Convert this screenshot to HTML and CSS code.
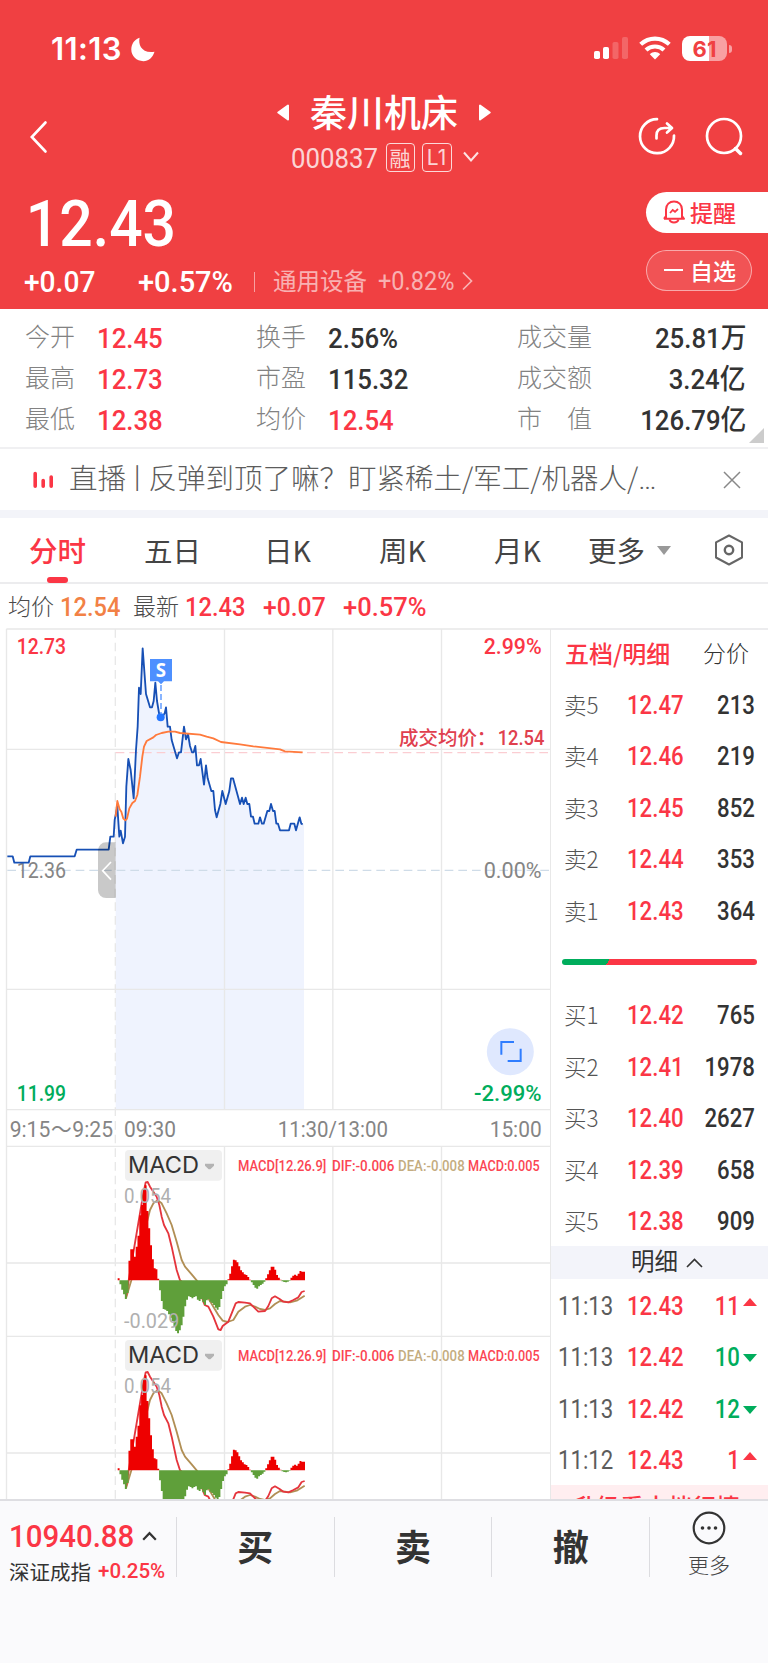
FILE: index.html
```html
<!DOCTYPE html>
<html lang="zh-CN">

<head>
    <meta charset="UTF-8">
    <meta name="viewport" content="width=device-width, initial-scale=1.0">
    <title>秦川机床 000837</title>
    <link rel="stylesheet" href="styles.css">
</head>

<body>

    <header class="header">
        <div class="status-bar">
            <div class="status-left">
                <span class="clock">11:13</span>
                <svg class="moon" width="24" height="25" viewBox="0 0 24 25"><path fill="#fff" d="M8.6.8C7 7.500 10.500 16.800 23.500 14.800 21.700 20.600 17.600 24.200 12.300 24.200 5.600 24.200.3 19.200.3 12.600.3 7 3.600 2.300 8.600.8z"/></svg>
            </div>
            <div class="status-right">
                <svg width="34" height="24" viewBox="0 0 34 24" fill="#fff">
                    <rect x="0" y="15" width="6" height="8" rx="1.800"/>
                    <rect x="9" y="11" width="6" height="12" rx="1.800"/>
                    <rect x="18.500" y="6" width="6" height="17" rx="1.800" opacity=".2"/>
                    <rect x="28" y="1" width="6" height="22" rx="1.800" opacity=".2"/>
                </svg>
                <svg width="32" height="24" viewBox="0 0 32 24" fill="none" stroke="#fff">
                    <path stroke-width="4.200" d="M1.700 8.300C10 .6 22 .6 30.300 8.300"/>
                    <path stroke-width="4.200" d="M7 14C12 9.300 20 9.300 25 14"/>
                    <path fill="#fff" stroke="none" d="M10.800 18.300C13.700 15.300 18.300 15.300 21.200 18.300L16 23.500z"/>
                </svg>
                <div class="battery"><span class="battery-text">61</span></div>
            </div>
        </div>

        <div class="title-bar">
            <svg class="back" width="18" height="34" viewBox="0 0 18 34"><path d="M15.500 2.500L1.800 17l13.700 14.500" fill="none" stroke="#fff" stroke-width="2.600" stroke-linecap="round"/></svg>
            <div class="title-main">
                <div class="title-name">
                    <svg width="12" height="17" viewBox="0 0 12 17"><path fill="#fff" stroke="#fff" stroke-width="2" stroke-linejoin="round" d="M11 1.500v14L1.300 8.500z"/></svg>
                    <span>秦川机床</span>
                    <svg width="12" height="17" viewBox="0 0 12 17"><path fill="#fff" stroke="#fff" stroke-width="2" stroke-linejoin="round" d="M1 1.500v14l9.700-7z"/></svg>
                </div>
                <div class="title-code">
                    <span class="num code">000837</span>
                    <span class="badge">融</span>
                    <span class="badge badge-l1">L1</span>
                    <svg width="16" height="12" viewBox="0 0 16 12"><path d="M1 1.500l7 8 7-8" fill="none" stroke="#fff" stroke-opacity=".85" stroke-width="2"/></svg>
                </div>
            </div>
            <div class="title-icons">
                <svg width="38" height="38" viewBox="0 0 38 38" fill="none" stroke="#fff" stroke-width="2.700" stroke-linecap="round" stroke-linejoin="round">
                    <path d="M19 2.200A17 17 0 1 0 36 18.500"/>
                    <path d="M18.500 21.500v-3c0-5 3-7.500 8-7.500h7M29 6.500l5 4.500-5 4.500"/>
                </svg>
                <svg width="38" height="40" viewBox="0 0 38 40" fill="none" stroke="#fff" stroke-width="2.700" stroke-linecap="round">
                    <circle cx="19" cy="19" r="17"/>
                    <path stroke-width="3.500" d="M30.500 31.500l5 5"/>
                </svg>
            </div>
        </div>

        <div class="quote">
            <div class="quote-left">
                <div class="num price">12.43</div>
                <div class="change">
                    <span class="num change-value">+0.07</span>
                    <span class="num change-rate">+0.57%</span>
                    <span class="change-line"></span>
                    <span class="sector">通用设备</span>
                    <span class="num sector-rate">+0.82%</span>
                    <svg width="11" height="20" viewBox="0 0 11 20"><path d="M1 1.500L9.500 10 1 18.500" fill="none" stroke="#fff" stroke-opacity=".6" stroke-width="1.700"/></svg>
                </div>
            </div>
            <div class="quote-right">
                <div class="pill pill-alert">
                    <svg width="22" height="24" viewBox="0 0 22 24" fill="none" stroke="#fb3645" stroke-width="2">
                        <path stroke-linejoin="round" d="M3 18V9.500C3 4.500 6.500 1.500 11 1.500s8 3 8 8V18M1 18.800h20L19 16M3 16l-2 2.800"/>
                        <path d="M6.500 19.500c1.200 4 7.800 4 9 0"/>
                        <path stroke-width="1.800" d="M7 13l2.700-3 2.300 1.800L15 9"/>
                    </svg>
                    <span>提醒</span>
                </div>
                <div class="pill pill-self">
                    <span class="minus"></span>
                    <span>自选</span>
                </div>
            </div>
        </div>
    </header>

    <section class="stats">
        <div class="stats-col col-1">
            <div class="stat"><span class="label">今开</span><span class="num red">12.45</span></div>
            <div class="stat"><span class="label">最高</span><span class="num red">12.73</span></div>
            <div class="stat"><span class="label">最低</span><span class="num red">12.38</span></div>
        </div>
        <div class="stats-col col-2">
            <div class="stat"><span class="label">换手</span><span class="num">2.56%</span></div>
            <div class="stat"><span class="label">市盈</span><span class="num">115.32</span></div>
            <div class="stat"><span class="label">均价</span><span class="num red">12.54</span></div>
        </div>
        <div class="stats-col col-3">
            <div class="stat"><span class="label">成交量</span><span class="num">25.81万</span></div>
            <div class="stat"><span class="label">成交额</span><span class="num">3.24亿</span></div>
            <div class="stat"><span class="label">市　值</span><span class="num">126.79亿</span></div>
        </div>
        <span class="corner"></span>
    </section>

    <div class="news">
        <svg width="21" height="18" viewBox="0 0 21 18" stroke="#fb3645" stroke-width="3.600" stroke-linecap="round"><path d="M2.200 2.500v12.800M10.200 9.500v5.800M18.200 6v9.300"/></svg>
        <span class="news-text">直播<span class="news-bar">丨</span>反弹到顶了嘛？盯紧稀土/军工/机器人/<span class="news-dots">…</span></span>
        <svg width="18" height="18" viewBox="0 0 18 18"><path d="M1 1l16 16M17 1L1 17" stroke="#888" stroke-width="1.500"/></svg>
    </div>

    <nav class="tabs">
        <span class="tab active">分时</span>
        <span class="tab">五日</span>
        <span class="tab">日K</span>
        <span class="tab">周K</span>
        <span class="tab">月K</span>
        <span class="tab tab-more">更多<i class="caret"></i></span>
        <svg class="tab-set" width="30" height="32" viewBox="0 0 30 32" fill="none" stroke="#666" stroke-width="2" stroke-linejoin="round">
            <path d="M15 1.500l13 6.800v15.200L15 30.500 2 23.500V8.300z"/>
            <circle cx="15" cy="16" r="4.200" stroke-width="2.400"/>
        </svg>
    </nav>

    <div class="latest">
        <span class="latest-label">均价</span><span class="num latest-price orange">12.54</span>
        <span class="latest-label latest-new">最新</span><span class="num latest-price red">12.43</span>
        <span class="num red latest-diff">+0.07</span>
        <span class="num red latest-rate">+0.57%</span>
    </div>

    <main class="market">
        <svg class="chart" width="551" height="871" viewBox="0 24 1653 2613">
            <!-- area under the price line -->
            <path class="area" d="M347 1470V600L352 560 358 650 362 632 369 670 375 650 379 500 385 417 392 450 401 535 408 390 413 320 417 203 422 222 428 85 438 222 450 262 456 262 461 243 466 188 471 243 478 285 487 290 494 280 498 262 503 320 510 320 515 360 531 415 537 397 543 397 552 320 558 358 564 342 570 378 576 397 581 397 586 378 591 436 597 436 602 417 612 494 618 436 623 475 634 513 640 513 645 570 650 592 661 552 667 513 677 552 688 513 693 475 699 475 715 533 720 552 726 533 731 552 737 533 742 552 748 552 753 590 759 590 764 611 775 611 780 592 786 611 791 611 802 573 808 573 813 552 819 573 824 573 829 611 834 611 840 631 867 631 872 611 883 611 888 631 899 592 904 611 912 613V1470z"/>

            <!-- grid -->
            <g class="grid">
                <path d="M19 27H1653M19 388H1650M19 1108H1650M19 1469H1650M19 1579H1650M19 1929H1650M19 2149H1650M19 2499H1650"/>
                <path d="M19.500 27V2640M1652 27V2640"/>
                <path d="M673.500 27V1469M998.500 27V1469M1324.500 27V1469M673.500 1579V2640M998.500 1579V2640M1324.500 1579V2640"/>
                <path stroke-dasharray="26 15" d="M346 27V2640"/>
            </g>
            <path d="M22 751H1650" stroke="#cfdce8" stroke-width="4" stroke-dasharray="26 15"/>
            <path d="M347 398H1650" stroke="#fbcdd2" stroke-width="4" stroke-dasharray="26 15"/>

            <text class="t gray" x="50" y="774" textLength="148" lengthAdjust="spacingAndGlyphs">12.36</text>
            <text class="t gray" x="1451" y="774" textLength="174" lengthAdjust="spacingAndGlyphs">0.00%</text>

            <path class="line blue-line" d="M22 709H38L43 728H86L91 709H224L230 689H326L331 650H341L344 600 352 560 358 650 362 632 369 670 375 650 379 500 385 417 392 450 401 535 408 390 413 320 417 203 422 222 428 85 438 222 450 262 456 262 461 243 466 188 471 243 478 285 487 290 494 280 498 262 503 320 510 320 515 360 531 415 537 397 543 397 552 320 558 358 564 342 570 378 576 397 581 397 586 378 591 436 597 436 602 417 612 494 618 436 623 475 634 513 640 513 645 570 650 592 661 552 667 513 677 552 688 513 693 475 699 475 715 533 720 552 726 533 731 552 737 533 742 552 748 552 753 590 759 590 764 611 775 611 780 592 786 611 791 611 802 573 808 573 813 552 819 573 824 573 829 611 834 611 840 631 867 631 872 611 883 611 888 631 899 592 904 611 908 613"/>
            <path class="line orange-line" d="M347 590L352 543 359 568 364 575 370 596 376 601 381 596 388 565 397 549 405 543 412 525 420 470 427 410 432 380 440 363 460 352 468 345 485 339 505 335 525 335 540 339 600 344 620 350 640 355 663 366 720 373 760 379 840 388 855 394 908 397"/>

            <!-- sell marker -->
            <path d="M483 195V280" stroke="#4e90ff" stroke-width="4" stroke-dasharray="18 9"/>
            <path fill="#4e90ff" d="M450 117h66v67h-24l-9 9-9-9h-24z"/>
            <circle cx="482" cy="292" r="12" fill="#2476ff"/>
            <text class="marker" x="483" y="171" text-anchor="middle">S</text>

            <!-- call auction handle -->
            <path fill="#000" fill-opacity=".21" d="M347 667h-29a24 24 0 0 0-24 24v119a24 24 0 0 0 24 24h29z"/>
            <path d="M333 726l-25 26 25 27" fill="none" stroke="#fff" stroke-width="5"/>

            <text class="t red-t" x="50" y="103" textLength="148" lengthAdjust="spacingAndGlyphs">12.73</text>
            <text class="t red-t" x="1451" y="103" textLength="174" lengthAdjust="spacingAndGlyphs">2.99%</text>
            <text class="t cn" x="1197" y="375" textLength="292" lengthAdjust="spacingAndGlyphs">成交均价：</text>
            <text class="t cn-num" x="1493" y="375" textLength="140" lengthAdjust="spacingAndGlyphs">12.54</text>
            <text class="t green-t" x="50" y="1442" textLength="148" lengthAdjust="spacingAndGlyphs">11.99</text>
            <text class="t green-t" x="1422" y="1442" textLength="203" lengthAdjust="spacingAndGlyphs">-2.99%</text>

            <circle cx="1531" cy="1295" r="70.500" fill="#dfe8fe"/>
            <path d="M1504 1304v-38h38M1562 1286v37h-39" fill="none" stroke="#2f7dff" stroke-width="6"/>

            <text class="t gray" x="29" y="1550" textLength="122" lengthAdjust="spacingAndGlyphs">9:15</text>
            <text class="t gray wave" x="153" y="1550" textLength="62" lengthAdjust="spacingAndGlyphs">～</text>
            <text class="t gray" x="217" y="1550" textLength="122" lengthAdjust="spacingAndGlyphs">9:25</text>
            <text class="t gray" x="372" y="1550" textLength="156" lengthAdjust="spacingAndGlyphs">09:30</text>
            <text class="t gray" x="833" y="1550" textLength="331" lengthAdjust="spacingAndGlyphs">11:30/13:00</text>
            <text class="t gray" x="1469" y="1550" textLength="156" lengthAdjust="spacingAndGlyphs">15:00</text>

            <g id="macd" transform="translate(0 1410)">
                <path class="line macd-dea" d="M378 625L394 571 445 380 450 360 460 340 473 331 485 340 500 370 515 405 530 455 545 510 555 530 575 553 590 571 610 600 628 630 640 650 655 675 668 692 683 696 700 690 715 665 735 650 750 645 765 650 780 657 795 660 810 655 825 642 840 633 870 637 890 632 914 617"/>
                <path class="line macd-dif" d="M378 622L386 571 430 310 437 277 443 276 450 290 460 305 470 320 478 345 485 380 492 405 505 430 515 470 530 540 540 571 607 625 614 645 625 650 640 680 655 718 662 720 668 708 685 695 695 670 707 640 715 636 735 638 750 640 765 655 775 665 795 663 805 648 815 625 825 619 840 628 850 635 865 637 880 630 895 622 905 606 914 603"/>
                <path class="macd-up"/>
                <path class="macd-down"/>
                <rect x="375" y="180" width="291" height="92" rx="12" fill="#f0f0f0"/>
                <text class="macd-name" x="384" y="249" textLength="213" lengthAdjust="spacingAndGlyphs">MACD</text>
                <path fill="#b3b3b3" d="M615 221h27v6l-11 11h-5l-11-11z"/>
                <text class="legend" x="714" y="243" textLength="265" lengthAdjust="spacingAndGlyphs">MACD[12.26.9]</text>
                <text class="legend" x="996" y="243" textLength="187" lengthAdjust="spacingAndGlyphs">DIF:-0.006</text>
                <text class="legend legend-dea" x="1194" y="243" textLength="200" lengthAdjust="spacingAndGlyphs">DEA:-0.008</text>
                <text class="legend" x="1404" y="243" textLength="215" lengthAdjust="spacingAndGlyphs">MACD:0.005</text>
                <text class="t scale" x="372" y="338" textLength="141" lengthAdjust="spacingAndGlyphs">0.054</text>
                <text class="t scale" x="372" y="715" textLength="166" lengthAdjust="spacingAndGlyphs">-0.029</text>
            </g>
            <use href="#macd" y="570"/>
        </svg>

        <aside class="book">
            <div class="book-head"><span class="book-active">五档/明细</span><span>分价</span></div>
            <div class="row"><span class="side">卖5</span><span class="num red">12.47</span><span class="num vol">213</span></div>
            <div class="row"><span class="side">卖4</span><span class="num red">12.46</span><span class="num vol">219</span></div>
            <div class="row"><span class="side">卖3</span><span class="num red">12.45</span><span class="num vol">852</span></div>
            <div class="row"><span class="side">卖2</span><span class="num red">12.44</span><span class="num vol">353</span></div>
            <div class="row"><span class="side">卖1</span><span class="num red">12.43</span><span class="num vol">364</span></div>
            <div class="ratio"></div>
            <div class="row"><span class="side">买1</span><span class="num red">12.42</span><span class="num vol">765</span></div>
            <div class="row"><span class="side">买2</span><span class="num red">12.41</span><span class="num vol">1978</span></div>
            <div class="row"><span class="side">买3</span><span class="num red">12.40</span><span class="num vol">2627</span></div>
            <div class="row"><span class="side">买4</span><span class="num red">12.39</span><span class="num vol">658</span></div>
            <div class="row"><span class="side">买5</span><span class="num red">12.38</span><span class="num vol">909</span></div>
            <div class="detail-head">明细
                <svg width="17" height="10" viewBox="0 0 17 10"><path d="M1 9l7.500-7.500L16 9" fill="none" stroke="#333" stroke-width="1.600"/></svg>
            </div>
            <div class="row deal"><span class="num time">11:13</span><span class="num red">12.43</span><span class="num vol red">11</span><i class="up"></i></div>
            <div class="row deal"><span class="num time">11:13</span><span class="num red">12.42</span><span class="num vol green">10</span><i class="down"></i></div>
            <div class="row deal"><span class="num time">11:13</span><span class="num red">12.42</span><span class="num vol green">12</span><i class="down"></i></div>
            <div class="row deal"><span class="num time">11:12</span><span class="num red">12.43</span><span class="num vol red">1</span><i class="up"></i></div>
            <div class="upgrade">升级看十档行情</div>
        </aside>
    </main>

    <footer class="footer">
        <div class="index">
            <div class="index-top">
                <span class="num index-value">10940.88</span>
                <svg width="15" height="10" viewBox="0 0 15 10"><path d="M1.200 8.800l6.300-6.600 6.300 6.600" fill="none" stroke="#333" stroke-width="2.200"/></svg>
            </div>
            <div class="index-bottom">深证成指<span class="num red">+0.25%</span></div>
        </div>
        <div class="action">买</div>
        <div class="action">卖</div>
        <div class="action">撤</div>
        <div class="more">
            <svg width="34" height="34" viewBox="0 0 34 34"><circle cx="17" cy="17" r="15.300" fill="none" stroke="#333" stroke-width="2.200"/><g fill="#333"><circle cx="10.500" cy="17" r="1.800"/><circle cx="17" cy="17" r="1.800"/><circle cx="23.500" cy="17" r="1.800"/></g></svg>
            <span>更多</span>
        </div>
    </footer>

    <script>
        // MACD histogram, one value per minute from 09:30
        const macd = [6, -12, -28, -42, -56, -38, 59, 93, 93, 71, 101, 134, 195, 226, 270, 285, 208, 156, 105, 63,
            36, 33, 5, -30, -62, -86, -88, -92, -102, -112, -122, -140, -152, -159, -150, -135, -109, -78, -58, -48,
            -50, -54, -50, -48, -58, -62, -56, -66, -74, -60, -56, -64, -68, -74, -82, -88, -80, -56, -32, -18,
            -12, 3, 20, 42, 62, 60, 54, 42, 30, 24, 18, 16, 10, 2, -6, -14, -22, -25, -18, -14,
            -10, -4, 6, 18, 30, 41, 41, 32, 16, 8, 2, -3, -5, -6, -4, -1, 8, 14, 17, 14, 20, 28, 26, 26];
        const barWidth = 5.4;
        let up = '';
        let down = '';

        macd.forEach(function (value, i) {
            const x = (353 + i * barWidth).toFixed(1);
            const bar = 'M' + x + ' 571v' + (-value) + 'h' + (barWidth + 0.4) + 'V571z';
            if (value > 0) {
                up += bar;
            } else {
                down += bar;
            }
        });

        document.querySelector('.macd-up').setAttribute('d', up);
        document.querySelector('.macd-down').setAttribute('d', down);
    </script>

</body>

</html>
```

FILE: styles.css
```css
* {
    box-sizing: border-box;
}

body {
    margin: 0;
    width: 768px;
    height: 1663px;
    overflow: hidden;
    display: flex;
    flex-direction: column;
    background-color: #fff;
    color: #333;
    font-family: "Noto Sans CJK SC", sans-serif;
    line-height: 1;
}

svg {
    display: block;
    flex: none;
}

span {
    white-space: nowrap;
}

.num {
    font-family: Roboto, "Noto Sans CJK SC", sans-serif;
    font-weight: 500;
    transform-origin: left center;
}

.red {
    color: #fb3645;
}

.green {
    color: #00ad5c;
}

.orange {
    color: #f28145;
}

/* header */
.header {
    height: 309px;
    flex: none;
    background-color: #f04042;
    color: #fff;
}

.status-bar {
    height: 90px;
    padding: 36px 36px 0 51px;
    display: flex;
    justify-content: space-between;
    align-items: flex-start;
}

.status-left {
    display: flex;
    align-items: center;
    gap: 9px;
}

.clock {
    font: 600 31px/26px Inter, sans-serif;
    letter-spacing: 0.4px;
}

.status-right {
    display: flex;
    gap: 11px;
}

.battery {
    position: relative;
    width: 45px;
    height: 25px;
    border-radius: 8px;
    background: linear-gradient(90deg, #fff 61%, #f8a0a2 61%);
    text-align: center;
    margin-right: 5px;
}

.battery::after {
    content: "";
    position: absolute;
    right: -5px;
    top: 9px;
    width: 3px;
    height: 8px;
    border-radius: 0 3px 3px 0;
    background-color: #f8a0a2;
}

.battery-text {
    font: 700 22px/26px Inter, sans-serif;
    color: #f04042;
}

.title-bar {
    height: 92px;
    padding: 0 25px 0 30px;
    display: flex;
    justify-content: space-between;
    align-items: flex-start;
}

.back {
    margin-top: 30px;
}

.title-main {
    display: flex;
    flex-direction: column;
    align-items: center;
    padding-left: 82px;
}

.title-name {
    height: 42px;
    display: flex;
    align-items: center;
    gap: 21px;
    font-size: 37px;
    font-weight: 500;
}

.title-name svg {
    margin-top: 3px;
}

.title-code {
    height: 50px;
    display: flex;
    align-items: center;
    color: rgba(255, 255, 255, 0.8);
}

.code {
    width: 87px;
    font-size: 28px;
    font-weight: 400;
    margin: 3px 8px 0 1px;
    transform: scaleX(0.92);
}

.badge {
    width: 29px;
    height: 29px;
    border: 1px solid rgba(255, 255, 255, 0.8);
    border-radius: 4px;
    font-size: 21px;
    line-height: 27px;
    text-align: center;
    margin-right: 7px;
}

.badge-l1 {
    width: 30px;
    font-family: Inter, sans-serif;
    margin-right: 11px;
}

.title-icons {
    display: flex;
    gap: 29px;
    padding-top: 27px;
}

.quote {
    display: flex;
    justify-content: space-between;
}

.quote-left {
    padding: 10px 0 0 24px;
}

.price {
    height: 65px;
    font-size: 64px;
    line-height: 65px;
    padding-left: 2px;
    transform: scaleX(0.92);
}

.change {
    height: 50px;
    display: flex;
    align-items: center;
    font-size: 29px;
}

.change-value {
    width: 71px;
    transform: scaleX(0.97);
}

.change-rate {
    width: 92px;
    margin-left: 43px;
}

.change-line {
    width: 1px;
    height: 20px;
    margin: 0 18px 0 24px;
    background-color: rgba(255, 255, 255, 0.5);
}

.sector,
.sector-rate {
    font-size: 23.5px;
    color: rgba(255, 255, 255, 0.6);
}

.sector {
    margin-top: -3px;
}

.sector-rate {
    width: 76px;
    font-size: 25px;
    font-weight: 400;
    margin: -2px 8px 0 11px;
    transform: scaleX(0.94);
}

.change svg {
    margin-top: -2px;
}

.quote-right {
    padding-top: 10px;
    width: 122px;
}

.pill {
    height: 41px;
    display: flex;
    align-items: center;
    gap: 5px;
    padding: 0 0 1px 17px;
    font-size: 23px;
    font-weight: 500;
}

.pill-alert {
    background-color: #fff;
    color: #fb3645;
    border-radius: 21px 0 0 21px;
    margin-bottom: 17px;
}

.pill-self {
    width: 106px;
    gap: 7px;
    background-color: rgba(255, 255, 255, 0.1);
    border: 1px solid rgba(255, 255, 255, 0.5);
    border-radius: 21px;
}

.minus {
    width: 19px;
    height: 2px;
    background-color: #fff;
}

/* stats */
.stats {
    position: relative;
    height: 140px;
    flex: none;
    display: flex;
    padding: 7px 22px 0 25px;
    border-bottom: 2px solid #f0f0f2;
}

.stat {
    height: 41.3px;
    display: flex;
    align-items: center;
    font-size: 28px;
}

.stat .num {
    margin-top: 4px;
    transform: scaleX(0.92);
}

.label {
    width: 72px;
    font-size: 25px;
    font-weight: 300;
    color: #828282;
    padding-bottom: 3px;
}

.col-1 {
    width: 231px;
}

.col-2 {
    width: 261px;
}

.col-3 {
    flex: 1;
}

.col-3 .stat {
    justify-content: space-between;
}

.col-3 .num {
    transform-origin: right center;
}

.corner {
    position: absolute;
    right: 4px;
    bottom: 4px;
    border-left: 15px solid transparent;
    border-bottom: 15px solid #ccc;
}

.news {
    height: 69px;
    flex: none;
    display: flex;
    align-items: center;
    padding: 0 27px 0 33px;
    border-bottom: 8px solid #f3f4f9;
}

.news-text {
    flex: 1;
    padding: 0 0 2px 15px;
    font-size: 28.5px;
    font-weight: 300;
    color: #5c5c5c;
}

.news-bar {
    margin: 0 -3px;
}

.news-dots {
    font-family: Roboto, sans-serif;
}

/* tabs */
.tabs {
    height: 66px;
    flex: none;
    display: flex;
    align-items: center;
    border-bottom: 2px solid #ececee;
}

.tab {
    position: relative;
    width: 115px;
    height: 64px;
    line-height: 64px;
    text-align: center;
    font-size: 28.5px;
    color: #444;
}

.tab.active {
    color: #fb3645;
    font-weight: 500;
}

.tab.active::after {
    content: "";
    position: absolute;
    left: 47px;
    bottom: -1px;
    width: 21px;
    height: 6px;
    border-radius: 3px;
    background-color: #fb3645;
}

.tab-more {
    width: auto;
    display: flex;
    align-items: center;
    margin-left: 13px;
}

.caret {
    margin-left: 12px;
    border: 7px solid transparent;
    border-top: 9px solid #999;
    border-bottom: 0;
}

.tab-set {
    margin-left: 43px;
}

.latest {
    height: 44px;
    flex: none;
    display: flex;
    align-items: center;
    padding: 0 0 1px 8px;
    font-size: 26px;
}

.latest .num {
    margin-top: 3px;
    transform: scaleX(0.91);
}

.latest-price {
    width: 60px;
}

.latest-label {
    width: 52px;
    font-size: 23px;
    font-weight: 300;
    color: #4a4a4a;
}

.latest-new {
    margin-left: 13px;
}

.latest .latest-diff {
    width: 62px;
    margin-left: 18px;
    transform: scaleX(0.95);
}

.latest .latest-rate {
    margin-left: 18px;
    transform: scaleX(0.98);
}

/* chart */
.market {
    height: 871px;
    flex: none;
    display: flex;
    overflow: hidden;
}

.area {
    fill: #eff3fe;
}

.grid {
    fill: none;
    stroke: #e8e8e8;
    stroke-width: 4;
}

.line {
    fill: none;
    stroke-width: 5.5;
    stroke-linejoin: round;
}

.blue-line {
    stroke: #1750b5;
}

.orange-line {
    stroke: #ff7a3c;
}

.t {
    font-family: Roboto, "Noto Sans CJK SC", sans-serif;
    font-size: 64px;
    font-weight: 500;
}

.gray {
    fill: #858585;
    font-weight: 400;
}

.red-t {
    fill: #fb3645;
}

.green-t {
    fill: #00ad5c;
}

.cn,
.cn-num {
    font-size: 59px;
    fill: #e0404e;
}

.marker {
    font: 700 56px "Noto Sans", sans-serif;
    fill: #fff;
}

.macd-dif {
    stroke: #e5353d;
}

.macd-dea {
    stroke: #b18f55;
}

.macd-up {
    fill: #ee0000;
}

.macd-down {
    fill: #5f9f3a;
}

.macd-name {
    font: 400 69px Inter, sans-serif;
    fill: #333;
}

.legend {
    font: 500 43px Roboto, sans-serif;
    fill: #fb4552;
}

.legend-dea {
    fill: #c4ac80;
}

.scale {
    font-size: 60px;
    font-weight: 400;
    fill: #b0b0b0;
}

/* order book */
.book {
    flex: 1;
    border-top: 2px solid #ececee;
}

.book-head {
    height: 49px;
    display: flex;
    justify-content: space-between;
    align-items: center;
    padding: 0 19px 4px 14px;
    font-size: 23px;
    font-weight: 300;
}

.book-active {
    color: #fb3645;
    font-size: 24px;
    font-weight: 500;
}

.row {
    height: 51.5px;
    display: flex;
    align-items: center;
    padding: 0 13px 0 13px;
    font-size: 25.5px;
}

.row .num {
    margin-top: 1px;
    transform: scaleX(0.87);
}

.side {
    width: 63px;
    font-size: 22.5px;
    font-weight: 300;
    color: #555;
    padding-bottom: 2px;
}

.row .vol {
    flex: 1;
    text-align: right;
    transform-origin: right center;
}

.ratio {
    height: 6px;
    margin: 22px 11px 25px;
    border-radius: 3px;
    background: linear-gradient(120deg, #00ad5c 24%, #fb3645 24%);
}

.detail-head {
    height: 33px;
    display: flex;
    align-items: center;
    justify-content: center;
    gap: 8px;
    padding: 0 0 3px 15px;
    margin-top: -1px;
    background-color: #f3f4fa;
    font-size: 23.5px;
}

.detail-head svg {
    margin-top: 4px;
}

.deal {
    padding: 1px 11px 0 7px;
}

.deal .num {
    margin-top: 2px;
}

.row .time {
    width: 69px;
    font-weight: 400;
    color: #5c5c5c;
}

.up,
.down {
    margin: 0 0 7px 3px;
    border: 7px solid transparent;
    border-bottom: 8px solid #fb3645;
    border-top: 0;
}

.down {
    margin: 3px 0 0 3px;
    border-top: 8px solid #00ad5c;
    border-bottom: 0;
}

.upgrade {
    height: 40px;
    padding: 9px 0 0 21px;
    background-color: #ffeef0;
    color: #fb3645;
    font-size: 24px;
    font-weight: 500;
}

/* bottom bar */
.footer {
    flex: 1;
    display: flex;
    align-items: flex-start;
    padding-top: 16px;
    border-top: 2px solid #dedee2;
    background-color: #fafafc;
}

.index {
    width: 176px;
    padding: 3px 0 0 9px;
}

.index-top {
    height: 32px;
    display: flex;
    align-items: center;
}

.index-value {
    width: 133px;
    font-size: 32px;
    color: #fb3645;
    transform: scaleX(0.92);
}

.index-bottom {
    height: 38px;
    display: flex;
    align-items: center;
    gap: 7px;
    font-size: 20.5px;
}

.action {
    width: 157.7px;
    height: 60px;
    border-left: 1px solid #dcdce0;
    text-align: center;
    font-size: 36px;
    font-weight: 700;
    line-height: 56px;
}

.more {
    width: 119px;
    height: 60px;
    border-left: 1px solid #dcdce0;
    display: flex;
    flex-direction: column;
    align-items: center;
    font-size: 21px;
    font-weight: 300;
    color: #444;
}

.more svg {
    margin: -6px 0 9px;
}
```
